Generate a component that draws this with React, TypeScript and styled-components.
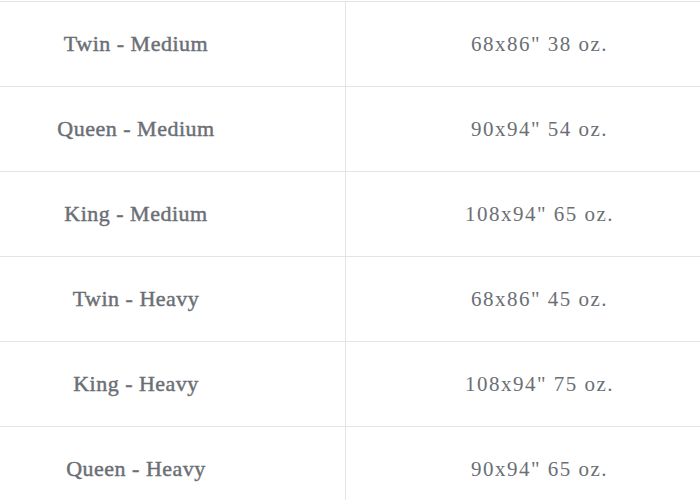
import React from "react";
import styled, { createGlobalStyle } from "styled-components";

const Global = createGlobalStyle`
  html, body { margin: 0; padding: 0; background: #ffffff; overflow: hidden; }
`;

const Page = styled.div`
  width: 700px;
  height: 500px;
  overflow: hidden;
  padding-top: 1px;
  box-sizing: border-box;
`;

const Table = styled.table`
  width: 700px;
  border-collapse: collapse;
  font-family: "Liberation Serif", "DejaVu Serif", serif;
  color: #6b6f75;
`;

const Row = styled.tr`
  height: 85px;
  border-top: 1px solid #e4e4e4;
`;

const SizeCell = styled.td`
  width: 272px;
  padding: 0 73px 0 0;
  text-align: center;
  vertical-align: middle;
  font-size: 22px;
  font-weight: 400;
  letter-spacing: 0.5px;
  -webkit-text-stroke: 0.45px #6b6f75;
  border-right: 1px solid #e4e4e4;
`;

const SpecCell = styled.td`
  padding: 0 0 0 33px;
  text-align: center;
  vertical-align: middle;
  font-size: 21px;
  letter-spacing: 1.5px;
`;

const rows = [
  ["Twin - Medium", "68x86\" 38 oz."],
  ["Queen - Medium", "90x94\" 54 oz."],
  ["King - Medium", "108x94\" 65 oz."],
  ["Twin - Heavy", "68x86\" 45 oz."],
  ["King - Heavy", "108x94\" 75 oz."],
  ["Queen - Heavy", "90x94\" 65 oz."],
];

export default function App() {
  return (
    <Page>
      <Global />
      <Table>
        <tbody>
          {rows.map(([size, spec]) => (
            <Row key={size}>
              <SizeCell>{size}</SizeCell>
              <SpecCell>{spec}</SpecCell>
            </Row>
          ))}
        </tbody>
      </Table>
    </Page>
  );
}
